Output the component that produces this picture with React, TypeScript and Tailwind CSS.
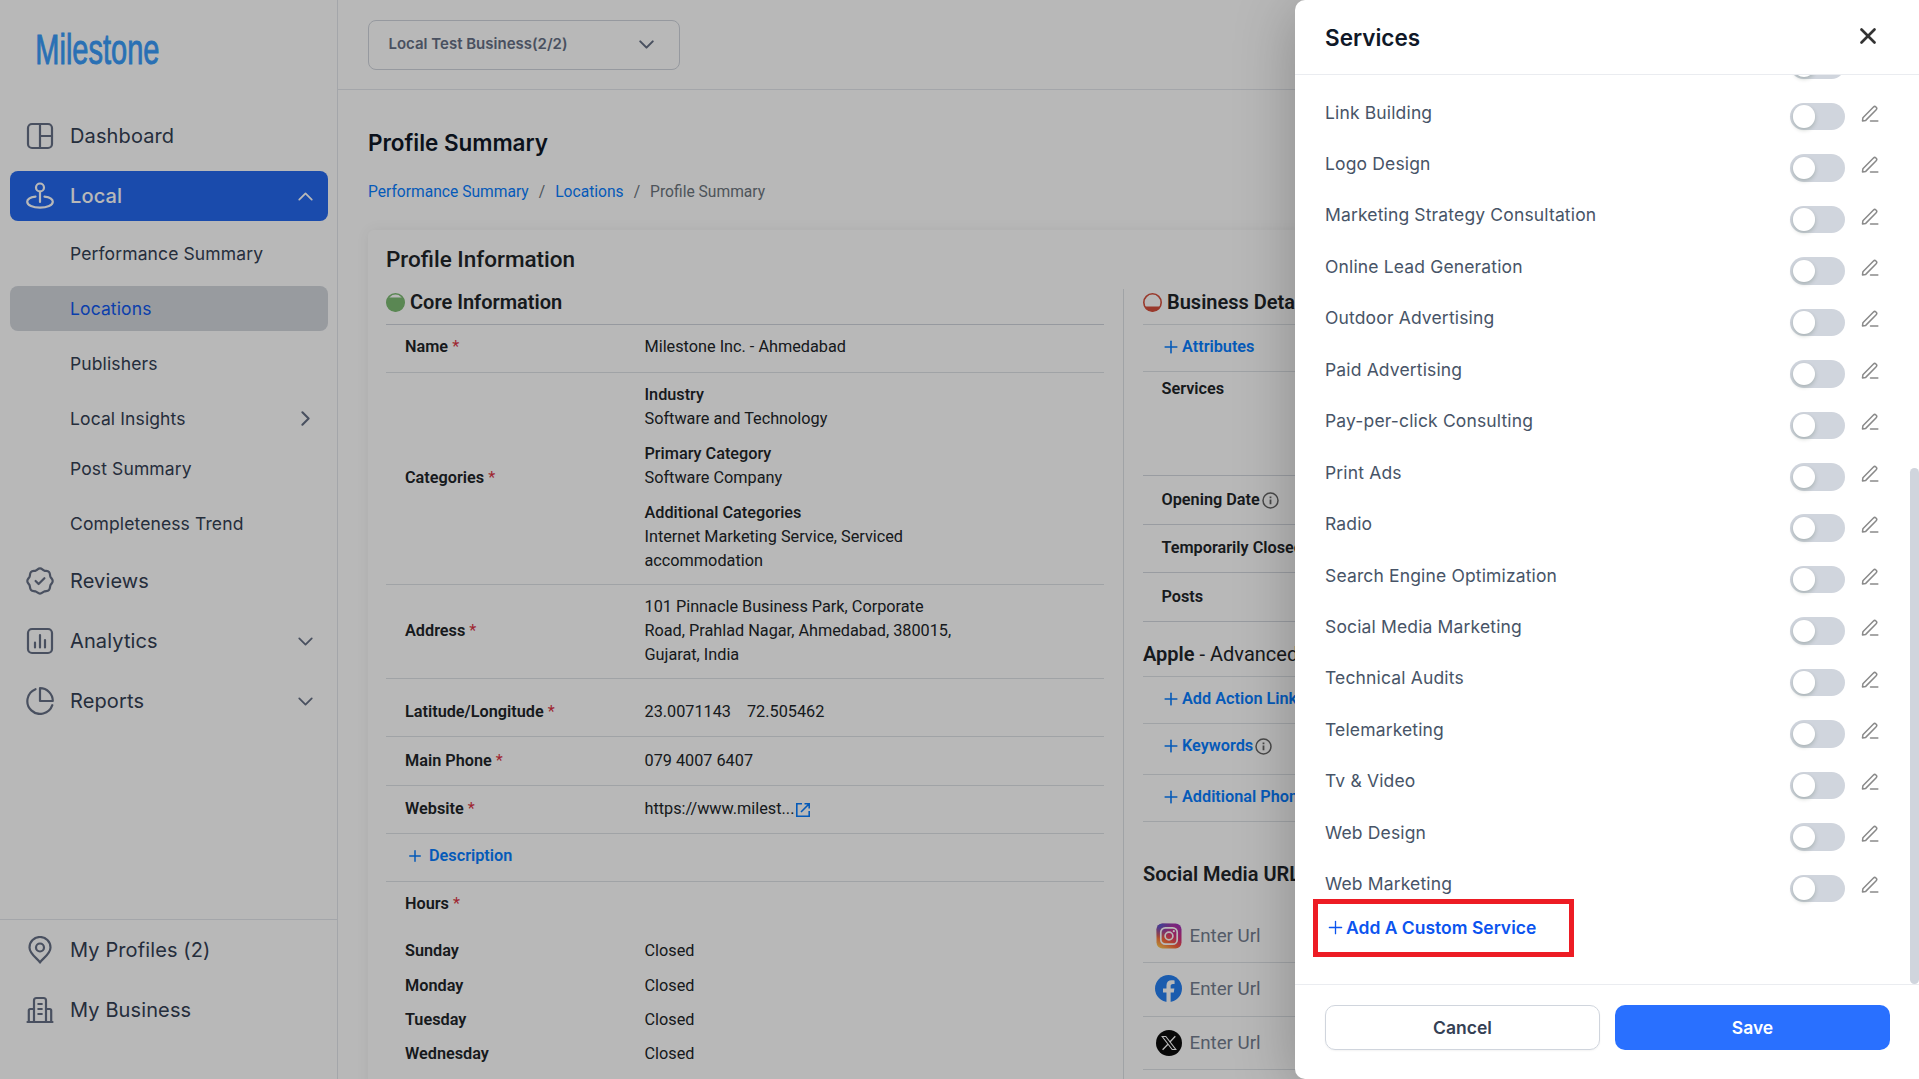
import React from 'react';
import { ChevronDown, ChevronRight, ChevronUp, Plus, X } from 'lucide-react';

type IconProps = { className?: string };

const stroke = {
  fill: 'none',
  stroke: 'currentColor',
  strokeWidth: 2.2,
  strokeLinecap: 'round' as const,
  strokeLinejoin: 'round' as const,
};

const DashboardIcon: React.FC<IconProps> = ({ className }) => (
  <svg viewBox="0 0 28 28" className={className} {...stroke}>
    <rect x="2" y="2" width="24" height="24" rx="4" />
    <path d="M14 2v24M14 14h12" />
  </svg>
);

const LocalIcon: React.FC<IconProps> = ({ className }) => (
  <svg viewBox="0 0 28 28" className={className} {...stroke}>
    <circle cx="14" cy="5.5" r="4" />
    <path d="M14 9.5v10.5" />
    <path d="M9.5 14.6C4.8 15.2 1.2 17.2 1.2 19.8c0 3.400 5.700 5.900 12.800 5.900s12.800-2.500 12.800-5.900c0-2.600-3.600-4.600-8.300-5.200" />
  </svg>
);

const ReviewsIcon: React.FC<IconProps> = ({ className }) => (
  <svg viewBox="0 0 28 28" className={className} {...stroke}>
    <path d="M14 1.300c1.900 0 2.700 1.600 4.300 2.300 1.600.6 3.400.1 4.700 1.400s.8 3.100 1.400 4.700c.7 1.600 2.300 2.400 2.300 4.300s-1.600 2.700-2.300 4.300c-.6 1.600-.1 3.400-1.400 4.700s-3.100.8-4.700 1.400c-1.600.7-2.400 2.300-4.300 2.300s-2.700-1.600-4.300-2.300c-1.600-.6-3.400-.1-4.700-1.400s-.8-3.100-1.400-4.700C2.900 16.700 1.300 15.900 1.300 14s1.600-2.700 2.300-4.300c.6-1.600.1-3.400 1.400-4.700s3.100-.8 4.700-1.400C11.300 2.900 12.100 1.300 14 1.300z" />
    <path d="M9.600 14l3 3 5.800-5.800" />
  </svg>
);

const AnalyticsIcon: React.FC<IconProps> = ({ className }) => (
  <svg viewBox="0 0 28 28" className={className} {...stroke}>
    <rect x="2" y="2" width="24" height="24" rx="4" />
    <path d="M9 15.500v5M14 8v12.500M19 13v7.500" />
  </svg>
);

const ReportsIcon: React.FC<IconProps> = ({ className }) => (
  <svg viewBox="0 0 28 28" className={className} {...stroke}>
    <path d="M9.500 2.200A12.800 12.800 0 1 0 26.300 18.200" />
    <path d="M14 1.200v12.800h12.800A12.800 12.800 0 0 0 14 1.200z" />
  </svg>
);

const ProfilesIcon: React.FC<IconProps> = ({ className }) => (
  <svg viewBox="0 0 28 28" className={className} {...stroke}>
    <circle cx="14" cy="11.500" r="4" />
    <path d="M14 26.500C12.500 23 3.500 18.500 3.500 11.500a10.500 10.500 0 0 1 21 0c0 7-9 11.500-10.500 15z" />
  </svg>
);

const BusinessIcon: React.FC<IconProps> = ({ className }) => (
  <svg viewBox="0 0 28 28" className={className} {...stroke}>
    <path d="M1.500 26h25M8 26V4.500a2.500 2.500 0 0 1 2.500-2.500h7a2.500 2.500 0 0 1 2.500 2.500V26M2.800 26V14.500a1.500 1.500 0 0 1 1.500-1.500H8M20 13h3.700a1.500 1.500 0 0 1 1.500 1.500V26M12.300 8h3.500M12.300 13h3.500M12.300 18h3.500" />
  </svg>
);

const InfoIcon: React.FC<IconProps> = ({ className }) => (
  <svg viewBox="0 0 17 17" className={className} fill="none" stroke="#666" strokeWidth="1.500">
    <circle cx="8.500" cy="8.500" r="7.500" />
    <path d="M8.500 7.500v4.800M8.500 4.500v1.700" strokeWidth="1.800" />
  </svg>
);

const ExternalIcon: React.FC<IconProps> = ({ className }) => (
  <svg viewBox="0 0 16 16" className={className} fill="none" stroke="currentColor" strokeWidth="1.600">
    <path d="M7 1.800H1.800v12.400h12.400V9M9.500 1.800h4.700v4.700M14.200 1.800L6 10" />
  </svg>
);

const PencilIcon: React.FC<IconProps> = ({ className }) => (
  <svg viewBox="0 0 18 18" className={className} fill="none" stroke="#8a8a8a" strokeWidth="1.500" strokeLinecap="round" strokeLinejoin="round">
    <path d="M1.500 15.900l.4-3.100L12.500 2a1.700 1.700 0 0 1 2.400 0l.3.300a1.700 1.700 0 0 1 0 2.400L4.700 15.400z" />
    <path d="M9.500 16h7.300" />
  </svg>
);

const InstagramIcon = () => (
  <svg viewBox="0 0 26 26" className="w-[26px] h-[26px] ml-px">
    <defs>
      <linearGradient id="igBase" x1="0.2" y1="1" x2="0.8" y2="0">
        <stop offset="0" stopColor="#ffc350" />
        <stop offset="0.300" stopColor="#f9653a" />
        <stop offset="0.600" stopColor="#d6307c" />
        <stop offset="1" stopColor="#a033b8" />
      </linearGradient>
      <radialGradient id="igBlue" cx="0.1" cy="0" r="0.600">
        <stop offset="0" stopColor="#4a5fd8" />
        <stop offset="1" stopColor="#4a5fd8" stopOpacity="0" />
      </radialGradient>
    </defs>
    <rect x="0.500" y="0.500" width="25" height="25" rx="6" fill="url(#igBase)" />
    <rect x="0.500" y="0.500" width="25" height="25" rx="6" fill="url(#igBlue)" />
    <rect x="4.800" y="4.800" width="16.400" height="16.400" rx="4.500" fill="none" stroke="#fff" strokeWidth="1.700" />
    <circle cx="13" cy="13" r="3.900" fill="none" stroke="#fff" strokeWidth="1.700" />
    <circle cx="17.800" cy="8.200" r="1.100" fill="#fff" />
  </svg>
);

const FacebookIcon = () => (
  <svg viewBox="0 0 24 24" className="w-[27px] h-[27px]">
    <circle cx="12" cy="12" r="12" fill="#2680f2" />
    <path
      fill="#fff"
      d="M16.700 15.500l.5-3.500h-3.300V9.800c0-1 .5-1.900 2-1.900h1.500v-3s-1.400-.2-2.700-.2c-2.700 0-4.500 1.600-4.500 4.700V12H7.100v3.500h3.100v8.400a12 12 0 0 0 3.700 0v-8.400z"
    />
  </svg>
);

const XLogoIcon = () => (
  <svg viewBox="0 0 26 26" className="w-[26px] h-[26px] ml-px">
    <circle cx="13" cy="13" r="13" fill="#0c0c0c" />
    <g fill="none" stroke="#fff">
      <path d="M6.200 6.500h3.600l10 13h-3.600z" strokeWidth="1.100" />
      <path d="M19.300 6.300l-5.600 6M11.900 14.200l-5.300 5.600" strokeWidth="1.300" />
    </g>
  </svg>
);

const Gauge: React.FC<{ color: string; level: number }> = ({ color, level }) => (
  <svg viewBox="0 0 19 19" className="w-[19px] h-[19px] mt-[3px]">
    <clipPath id={`level-${level}`}>
      <rect x="0" y={level} width="19" height="19" />
    </clipPath>
    <circle cx="9.500" cy="9.500" r="8.700" fill="none" stroke={color} strokeWidth="1.600" />
    <circle cx="9.500" cy="9.500" r="9" fill={color} clipPath={`url(#level-${level})`} />
  </svg>
);

const NavItem: React.FC<{
  icon: React.FC<IconProps>;
  label: string;
  active?: boolean;
  arrow?: 'up' | 'down';
}> = ({ icon: Icon, label, active, arrow }) => (
  <div
    className={`h-[50px] shrink-0 flex items-center rounded-lg pl-4 pr-[10px] text-[20px] tracking-[0.12px] ${
      active ? 'bg-[#2468ef] text-white font-medium' : 'text-[#344054]'
    }`}
  >
    <Icon className={`w-7 h-7 mr-4 ${active ? 'text-white' : 'text-[#667085]'}`} />
    <span className="flex-1">{label}</span>
    {arrow === 'up' && <ChevronUp size={25} strokeWidth={1.7} />}
    {arrow === 'down' && <ChevronDown size={25} strokeWidth={1.7} className="text-[#667085]" />}
  </div>
);

const SubItem: React.FC<{ label: string; active?: boolean; arrow?: boolean; className?: string }> = ({
  label,
  active,
  arrow,
  className = '',
}) => (
  <div
    className={`h-[45px] shrink-0 flex items-center rounded-lg pl-[60px] pr-[10px] pt-[2px] text-[17.5px] tracking-[0.12px] ${
      active ? 'bg-[#d3d7dd] text-[#1058ee]' : 'text-[#344054]'
    } ${className}`}
  >
    <span className="flex-1">{label}</span>
    {arrow && <ChevronRight size={25} strokeWidth={2} className="text-[#667085] -mt-[2px]" />}
  </div>
);

const Sidebar = () => (
  <aside className="w-[338px] shrink-0 border-r border-[#e4e7ec] flex flex-col">
    <div className="h-[111px] pl-9 pt-7">
      <svg width="130" height="44" className="overflow-visible">
        <text
          x="-1"
          y="36"
          textLength="188"
          lengthAdjust="spacingAndGlyphs"
          transform="scale(0.66 1)"
          fontSize="42"
          fill="#3a9cfa"
          stroke="#3a9cfa"
          strokeWidth="0.9"
          fontFamily="Liberation Sans, sans-serif"
        >
          Milestone
        </text>
      </svg>
    </div>
    <nav className="flex-1 flex flex-col gap-[10px] px-[10px] pr-[9px]">
      <NavItem icon={DashboardIcon} label="Dashboard" />
      <NavItem icon={LocalIcon} label="Local" active arrow="up" />
      <SubItem label="Performance Summary" />
      <SubItem label="Locations" active />
      <SubItem label="Publishers" />
      <SubItem label="Local Insights" arrow />
      <SubItem label="Post Summary" className="-mt-[5px]" />
      <SubItem label="Completeness Trend" />
      <NavItem icon={ReviewsIcon} label="Reviews" />
      <NavItem icon={AnalyticsIcon} label="Analytics" arrow="down" />
      <NavItem icon={ReportsIcon} label="Reports" arrow="down" />
    </nav>
    <div className="h-[160px] border-t border-[#e4e7ec] flex flex-col gap-[10px] px-[10px] pt-[5px]">
      <NavItem icon={ProfilesIcon} label="My Profiles (2)" />
      <NavItem icon={BusinessIcon} label="My Business" />
    </div>
  </aside>
);

const Label: React.FC<{ text: string }> = ({ text }) => (
  <div className="w-[239.5px] shrink-0 font-semibold">
    {text} <span className="font-normal text-[#dc3545]">*</span>
  </div>
);

const Row: React.FC<{ label: string; className: string; children?: React.ReactNode }> = ({
  label,
  className,
  children,
}) => (
  <div className={`flex items-center pl-[19px] border-b border-[#dee2e6] ${className}`}>
    <Label text={label} />
    <div>{children}</div>
  </div>
);

const categories = [
  { title: 'Industry', value: 'Software and Technology' },
  { title: 'Primary Category', value: 'Software Company' },
  { title: 'Additional Categories', value: 'Internet Marketing Service, Serviced accommodation' },
];

const hours = ['Sunday', 'Monday', 'Tuesday', 'Wednesday'];

const CoreInformation = () => (
  <section className="w-[718px] shrink-0">
    <div className="h-[35px] border-b border-[#d0d5dd] flex items-start gap-[5px] text-[20px] leading-6 font-semibold">
      <Gauge color="#7dbb74" level={4.5} />
      Core Information
    </div>
    <Row label="Name" className="h-12 pb-[3px]">
      Milestone Inc. - Ahmedabad
    </Row>
    <Row label="Categories" className="h-[212px] pb-[2px]">
      <div className="flex flex-col gap-[11px] w-[310px]">
        {categories.map((c) => (
          <div key={c.title}>
            <p className="font-medium">{c.title}</p>
            <p>{c.value}</p>
          </div>
        ))}
      </div>
    </Row>
    <Row label="Address" className="h-[94px] pb-[2px]">
      <p className="w-[315px]">101 Pinnacle Business Park, Corporate Road, Prahlad Nagar, Ahmedabad, 380015, Gujarat, India</p>
    </Row>
    <Row label="Latitude/Longitude" className="h-[58px] pt-2">
      <span className="mr-4">23.0071143</span>
      <span>72.505462</span>
    </Row>
    <Row label="Main Phone" className="h-[49px]">
      079 4007 6407
    </Row>
    <Row label="Website" className="h-12 pb-[2px]">
      <span className="flex items-center">
        https://www.milest...
        <ExternalIcon className="w-4 h-4 text-[#077dff] ml-px mt-[2px]" />
      </span>
    </Row>
    <div className="h-12 pb-1 pl-5 flex items-center gap-[5px] border-b border-[#dee2e6] text-[#077dff] font-semibold">
      <Plus size={18} strokeWidth={2} />
      Description
    </div>
    <div className="pl-[19px] pt-[10px]">
      <Label text="Hours" />
      <div className="mt-[18px]">
        {hours.map((day) => (
          <div key={day} className="flex items-center h-[34.4px]">
            <span className="w-[239.5px] font-semibold">{day}</span>
            <span>Closed</span>
          </div>
        ))}
      </div>
    </div>
  </section>
);

const AddRow: React.FC<{ label: string; info?: boolean; className: string }> = ({ label, info, className }) => (
  <div className={`flex items-center pl-[18px] border-b border-[#dee2e6] whitespace-nowrap text-[#077dff] font-semibold ${className}`}>
    <Plus size={20} strokeWidth={1.9} className="mr-px" />
    {label}
    {info && <InfoIcon className="w-[17px] h-[17px] ml-[2px]" />}
  </div>
);

const PlainRow: React.FC<{ label: string; info?: boolean; className: string }> = ({ label, info, className }) => (
  <div className={`flex pl-[18.5px] border-b border-[#d5d9e0] whitespace-nowrap font-semibold ${className}`}>
    {label}
    {info && <InfoIcon className="w-[17px] h-[17px] ml-[2px]" />}
  </div>
);

const SocialRow: React.FC<{ icon: React.ReactNode; className: string }> = ({ icon, className }) => (
  <div className={`flex items-center pl-3 border-b border-[#dee2e6] text-[18.75px] text-[#757f90] ${className}`}>
    <div className="w-[34.5px]">{icon}</div>
    Enter Url
  </div>
);

const BusinessDetails = () => (
  <section className="flex-1 ml-[19px] -mt-[1px] border-l border-[#dee2e6] pl-[19px]">
    <div className="h-[36px] pt-px border-b border-[#dee2e6] flex items-start gap-[5px] text-[20px] leading-6 font-semibold whitespace-nowrap">
      <Gauge color="#d5503d" level={13.5} />
      Business Details
    </div>
    <AddRow label="Attributes" className="h-[47px] pb-[2px]" />
    <PlainRow label="Services" className="h-[104px] pt-[5px]" />
    <PlainRow label="Opening Date" info className="h-[49px] items-center" />
    <PlainRow label="Temporarily Closed" className="h-12 items-center pb-[2px]" />
    <PlainRow label="Posts" className="h-[49px] items-center" />
    <div className="h-[55px] pt-5 border-b border-[#dee2e6] text-[20px] leading-6 whitespace-nowrap">
      <b className="font-semibold">Apple</b> - Advanced
    </div>
    <AddRow label="Add Action Links" className="h-[47px] pb-[2px]" />
    <AddRow label="Keywords" info className="h-[51px] pb-[6px]" />
    <AddRow label="Additional Phone" className="h-[47px] pb-[2px]" />
    <h3 className="h-[87px] pt-10 text-[20px] leading-6 font-semibold whitespace-nowrap">Social Media URLs</h3>
    <SocialRow icon={<InstagramIcon />} className="h-[54px]" />
    <SocialRow icon={<FacebookIcon />} className="h-[54px] pb-[2px]" />
    <SocialRow icon={<XLogoIcon />} className="h-[53px]" />
  </section>
);

const Page = () => (
  <main className="flex-1 min-w-0 flex flex-col">
    <header className="h-[90px] shrink-0 border-b border-[#e4e7ec] pl-[30px] pt-5">
      <div className="w-[312px] h-[50px] border border-[#d0d5dd] rounded-lg flex items-center justify-between pl-[19.5px] pr-5 pb-[2px] text-[15px] font-semibold text-[#667085]">
        Local Test Business(2/2)
        <ChevronDown size={25} strokeWidth={2} />
      </div>
    </header>
    <div className="pl-[30px] pt-[37px]">
      <h1 className="text-[22.5px] leading-8 tracking-[-0.05px] font-semibold text-[#101828]">Profile Summary</h1>
      <div className="mt-[22px] h-6 flex items-center gap-[10px] font-['Roboto'] text-[15.625px] text-[#6c757d]">
        <span className="text-[#077dff]">Performance Summary</span>
        <span>/</span>
        <span className="text-[#077dff]">Locations</span>
        <span>/</span>
        <span>Profile Summary</span>
      </div>
      <div className="mt-[25px] w-[1500px] h-[860px] rounded-md shadow-[0_0_14px_rgba(0,0,0,0.06)] pl-[18px] font-['Roboto'] text-[16.25px] leading-6 text-[#212529]">
        <h2 className="h-[60px] pt-[17px] text-[22.5px] leading-6 font-medium">Profile Information</h2>
        <div className="flex h-[800px]">
          <CoreInformation />
          <BusinessDetails />
        </div>
      </div>
    </div>
  </main>
);

const services = [
  'Link Building',
  'Logo Design',
  'Marketing Strategy Consultation',
  'Online Lead Generation',
  'Outdoor Advertising',
  'Paid Advertising',
  'Pay-per-click Consulting',
  'Print Ads',
  'Radio',
  'Search Engine Optimization',
  'Social Media Marketing',
  'Technical Audits',
  'Telemarketing',
  'Tv & Video',
  'Web Design',
  'Web Marketing',
];

const Toggle = () => (
  <div className="w-[55px] h-[27.5px] rounded-full bg-[#d0d5dd] p-[2.5px]">
    <div className="w-[22.5px] h-[22.5px] rounded-full bg-white shadow-[0_2px_4px_0_rgba(0,35,11,0.2)]" />
  </div>
);

const ServicesDrawer = () => (
  <div className="absolute top-0 right-0 w-[624px] h-[1079px] bg-white rounded-l-[10px] flex flex-col shadow-[0_10px_60px_rgba(0,0,0,0.25)]">
    <div className="h-[75px] shrink-0 border-b border-[#eaecf0] flex items-center justify-between pl-[30px] pr-[38px]">
      <h2 className="text-[22.5px] font-semibold text-[#101828] pt-[2px]">Services</h2>
      <X size={26} strokeWidth={2.5} className="text-[#333] -mt-[2px]" />
    </div>
    <div className="flex-1 min-h-0 overflow-hidden flex">
      <div className="flex-1 pl-[30px]">
        <div className="h-3 flex items-end justify-end pr-[65px]">
          <div className="mb-[8px]">
            <Toggle />
          </div>
        </div>
        {services.map((s) => (
          <div key={s} className="h-[51.45px] flex items-center">
            <span className="flex-1 text-[17.5px] tracking-[0.15px] text-[#475467]">{s}</span>
            <div className="mt-[8px]">
              <Toggle />
            </div>
            <PencilIcon className="w-[18px] h-[18px] ml-4 mr-[31px] mt-[2px]" />
          </div>
        ))}
        <div className="-ml-3 -mt-[11px] w-[261px] h-[58px] border-[5px] border-[#ed1c24] flex items-center pl-[7px] text-[17.5px] font-semibold text-[#0b54ef]">
          <Plus size={21} strokeWidth={1.5} className="-mt-px" />
          Add A Custom Service
        </div>
      </div>
      <div className="w-[9px] mt-[393px] h-[516px] rounded-full bg-[#d0d5dd]" />
    </div>
    <div className="h-[95px] shrink-0 border-t border-[#eaecf0] flex gap-[15px] pt-5 pl-[30px] text-[17.5px] font-semibold">
      <button className="w-[275px] h-[45px] pt-px border border-[#d0d5dd] rounded-[10px] text-[#344054] shadow-xs">Cancel</button>
      <button className="w-[275px] h-[45px] pt-px rounded-[10px] bg-[#2970ff] text-white">Save</button>
    </div>
  </div>
);

export default function App() {
  return (
    <div className="relative w-[1919px] h-[1079px] overflow-hidden bg-white font-['Inter']">
      <div className="flex h-full">
        <Sidebar />
        <Page />
      </div>
      <div className="absolute inset-0 bg-black/28" />
      <ServicesDrawer />
    </div>
  );
}
